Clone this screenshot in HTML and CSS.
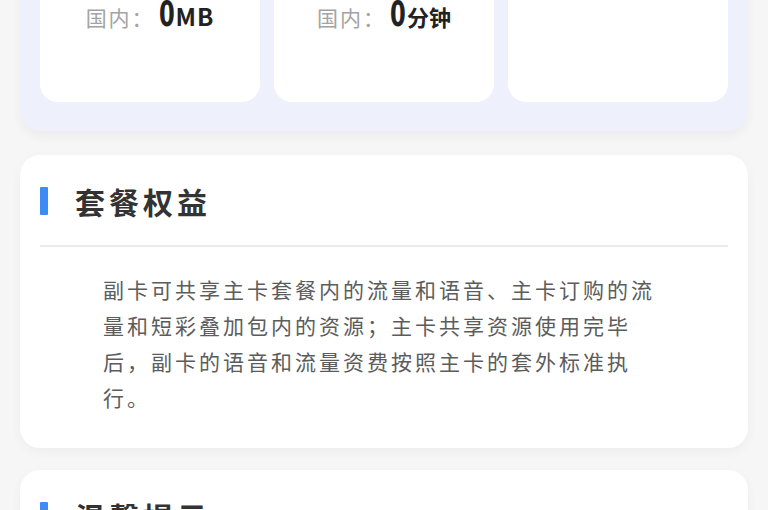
FILE: index.html
```html
<!DOCTYPE html>
<html lang="zh-CN">
<head>
    <meta charset="UTF-8">
    <title>副卡套餐详情</title>
    <link rel="stylesheet" href="styles.css">
</head>
<body>
    <div class="usage-panel">
        <div class="usage-card">
            <div class="usage-row">
                <span class="usage-label">国内：</span>
                <span class="usage-num">0</span>
                <span class="usage-unit usage-unit-en">MB</span>
            </div>
        </div>
        <div class="usage-card">
            <div class="usage-row">
                <span class="usage-label">国内：</span>
                <span class="usage-num">0</span>
                <span class="usage-unit">分钟</span>
            </div>
        </div>
        <div class="usage-card"></div>
    </div>

    <div class="section">
        <div class="section-head">
            <span class="section-bar"></span>
            <h2 class="section-title">套餐权益</h2>
        </div>
        <div class="section-line"></div>
        <p class="section-text">副卡可共享主卡套餐内的流量和语音、主卡订购的流量和短彩叠加包内的资源；主卡共享资源使用完毕后，副卡的语音和流量资费按照主卡的套外标准执行。</p>
    </div>

    <div class="section">
        <div class="section-head">
            <span class="section-bar"></span>
            <h2 class="section-title">温馨提示</h2>
        </div>
        <div class="section-line"></div>
    </div>
</body>
</html>
```

FILE: styles.css
```css
body {
    margin: 0;
    padding: 0 20px;
    background: #f6f6f7;
    font-family: "Noto Sans CJK SC", "Noto Sans", sans-serif;
    overflow: hidden;
}
.usage-panel {
    display: grid;
    grid-template-columns: repeat(3, 1fr);
    gap: 14px;
    margin-top: -60px;
    padding: 20px 20px 29px;
    background: #eef1fc;
    border-radius: 0 0 20px 20px;
    box-shadow: 0 6px 10px rgba(0, 0, 0, 0.04);
}
.usage-card {
    height: 142px;
    padding-top: 41px;
    box-sizing: border-box;
    background: #fff;
    border-radius: 18px;
    display: flex;
    justify-content: center;
    align-items: flex-start;
}
.usage-row {
    display: flex;
    align-items: baseline;
    line-height: 26px;
}
.usage-label {
    font-size: 21px;
    letter-spacing: 2px;
    color: #a3a3a3;
    margin-right: 7px;
}
.usage-num {
    font-family: "DejaVu Sans Condensed", "DejaVu Sans", sans-serif;
    font-weight: bold;
    font-size: 35px;
    transform: scaleX(0.72);
    margin: 0 -2px 0 -6px;
    color: #222;
}
.usage-unit {
    font-size: 22px;
    font-weight: bold;
    color: #222;
}
.usage-unit-en {
    font-size: 24px;
    letter-spacing: 1px;
}
.section {
    margin-top: 24px;
    background: #fff;
    border-radius: 20px;
    padding: 28px 20px 33px;
    box-shadow: 0 4px 12px rgba(0, 0, 0, 0.04);
}
.section + .section {
    margin-top: 22px;
}
.section-head {
    display: flex;
    align-items: center;
    height: 36px;
}
.section-bar {
    width: 8px;
    height: 28px;
    background: #3d8bf5;
    border-radius: 1px;
    margin-right: 27px;
}
.section-title {
    margin: 0;
    font-size: 30px;
    font-weight: bold;
    letter-spacing: 4px;
    color: #333;
}
.section-line {
    height: 2px;
    background: #ebebeb;
    margin-top: 26px;
}
.section-text {
    margin: 24px 0 0;
    padding: 0 63px;
    font-size: 21px;
    line-height: 36px;
    letter-spacing: 3px;
    color: #5c5c5c;
}
```
